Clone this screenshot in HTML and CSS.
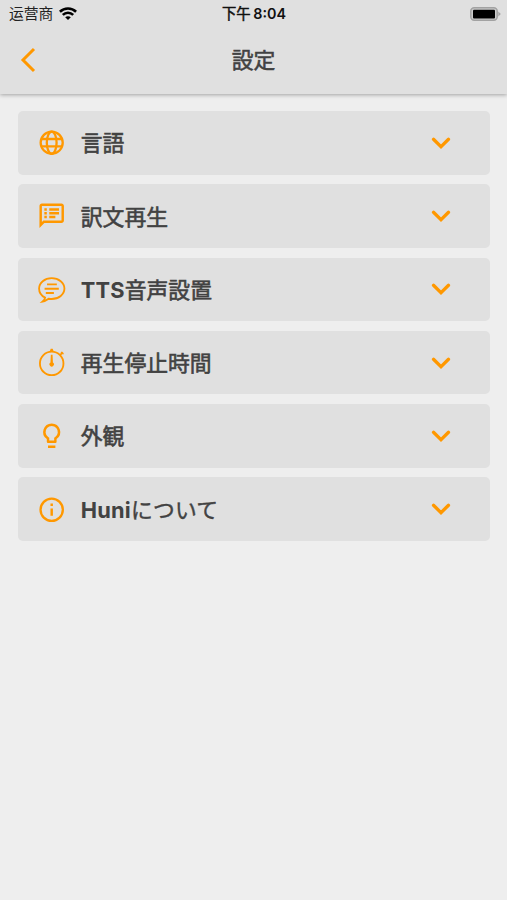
FILE: index.html
```html
<!DOCTYPE html>
<html lang="ja">
<head>
<meta charset="utf-8">
<title>設定</title>
<link rel="stylesheet" href="styles.css">
</head>
<body>
<header class="header">
  <div class="status">
    <div class="carrier"><span lang="zh-CN">运营商</span>
      <svg class="wifi" viewBox="0 0 18 13"><g fill="none" stroke="#000" stroke-width="2.6"><path d="M.9 4.7C5.4.4 12.6.4 17.1 4.7"/><path d="M3.8 7.9C6.8 5 11.2 5 14.2 7.9"/></g><path d="M9 13 6.2 10.2C7.8 8.8 10.2 8.8 11.8 10.2Z"/></svg>
    </div>
    <div class="clock"><span lang="zh-CN">下午</span> 8:04</div>
    <svg class="battery" viewBox="0 0 31 14"><rect x=".8" y=".8" width="26.4" height="12.4" rx="3.4" fill="#ccc" stroke="#a2a2a2" stroke-width="1.5"/><rect x="3" y="2.7" width="22" height="8.8" rx="1"/><path d="M28.300 4.600 30.800 7 28.300 9.400Z" fill="#a2a2a2"/></svg>
  </div>
  <div class="nav">
    <svg class="back" viewBox="0 0 16 26"><path d="M14 2 3 13 14 24"/></svg>
    <h1 class="title">設定</h1>
  </div>
</header>
<main class="list">
  <section class="card">
    <svg class="icon" viewBox="0 0 24 24"><g class="line"><circle cx="12" cy="12" r="9"/><ellipse cx="12" cy="12" rx="4" ry="9"/><path d="M3.5 9h17M3.5 15h17"/></g></svg>
    <span class="label">言語</span>
    <svg class="chevron" viewBox="0 0 20 12"><path d="M2.500 2.300 10 9.600 17.500 2.300"/></svg>
  </section>
  <section class="card">
    <svg class="icon" viewBox="0 0 24 24"><path fill-rule="evenodd" d="M20 2H4c-1.1 0-1.99.9-1.99 2L2 22l4-4h14c1.1 0 2-.9 2-2V4c0-1.1-.9-2-2-2zm0 14H5.2L4 17.2V4h16v12zM6 12h2v2H6zm0-3h2v2H6zm0-3h2v2H6zm4 6h5v2h-5zm0-3h8v2h-8zm0-3h8v2h-8z"/></svg>
    <span class="label">訳文再生</span>
    <svg class="chevron" viewBox="0 0 20 12"><path d="M2.500 2.300 10 9.600 17.500 2.300"/></svg>
  </section>
  <section class="card">
    <svg class="icon" viewBox="0 0 24 24"><g class="line thin"><path d="M6.6 18.5C3.4 17 1.7 14.6 1.7 11.1 1.7 6.4 6.2 2.6 12 2.6s10.400 3.800 10.400 8.500S17.800 19.600 12 19.600q-1.300 0-2.500-.2C7.800 20.600 6.200 21.500 4.600 21.700Q6.300 20.300 6.600 18.500Z"/><path d="M8.200 7.700h8M6.200 11.200h11.600M7.200 14.700h6.600"/></g></svg>
    <span class="label"><b>TTS</b>音声設置</span>
    <svg class="chevron" viewBox="0 0 20 12"><path d="M2.500 2.300 10 9.600 17.500 2.300"/></svg>
  </section>
  <section class="card">
    <svg class="icon" viewBox="0 0 24 24"><g class="line thin"><circle cx="12" cy="12.600" r="9.600"/><path d="M18.800 5.800 20.600 4"/></g><path d="M11.200.6h1.600l1 2.700h-3.600zM19.200 3.400l1.200-.6 1.500 1.500-.6 1.200z"/><path d="M11.300 5.500h1.400l.3 6.300a1.800 1.800 0 1 1-2 0z"/></svg>
    <span class="label">再生停止時間</span>
    <svg class="chevron" viewBox="0 0 20 12"><path d="M2.500 2.300 10 9.600 17.500 2.300"/></svg>
  </section>
  <section class="card">
    <svg class="icon" viewBox="0 0 24 24"><path d="M9 20h6v2H9zM12 2a7 7 0 0 0-4 12.740V17a1 1 0 0 0 1 1h6a1 1 0 0 0 1-1v-2.260A7 7 0 0 0 12 2zm2.850 11.100-.85.600V16h-4v-2.300l-.85-.6A5 5 0 1 1 14.850 13.100z"/></svg>
    <span class="label">外観</span>
    <svg class="chevron" viewBox="0 0 20 12"><path d="M2.500 2.300 10 9.600 17.500 2.300"/></svg>
  </section>
  <section class="card">
    <svg class="icon" viewBox="0 0 24 24"><circle class="line" cx="12" cy="12" r="9.100"/><path d="M11 7h2v2h-2zM11 11h2v6h-2z"/></svg>
    <span class="label"><b>Huni</b><span class="kana">について</span></span>
    <svg class="chevron" viewBox="0 0 20 12"><path d="M2.500 2.300 10 9.600 17.500 2.300"/></svg>
  </section>
</main>
</body>
</html>
```
FILE: styles.css
```css
* { box-sizing: border-box; }
body {
  margin: 0;
  min-height: 900px;
  background: #eee;
  color: #424242;
  font-family: Inter, "Noto Sans CJK JP", sans-serif;
}
svg { display: block; flex: none; }
.header {
  height: 94px;
  background: #e0e0e0;
  box-shadow: 0 1px 4px rgba(0, 0, 0, .32);
}
.status {
  display: grid;
  grid-template-columns: 1fr auto 1fr;
  align-items: center;
  height: 27px;
  padding: 0 6px 0 9px;
  color: #222;
  font: 500 14.8px/20px Inter, "Noto Sans CJK SC", sans-serif;
}
.carrier { display: flex; align-items: center; gap: 6px; }
.carrier span { font-weight: 400; }
.wifi { width: 18px; height: 13px; }
.clock { padding-right: 2px; font-size: 14.300px; font-weight: 600; word-spacing: -1px; color: #111; }
.clock span { font-weight: 400; -webkit-text-stroke: .5px; }
.battery { width: 31px; height: 14px; justify-self: end; }
.nav {
  display: grid;
  grid-template-columns: 1fr auto 1fr;
  align-items: center;
  height: 66px;
  padding: 0 20px;
}
.back { width: 16px; height: 26px; fill: none; stroke: #ff9800; stroke-width: 3; }
.title { margin: 0; font-size: 21.8px; line-height: 30px; font-weight: 400; -webkit-text-stroke: .55px; }
.list {
  display: flex;
  flex-direction: column;
  gap: 9.8px;
  padding: 17px 17px 0 18px;
}
.card {
  display: flex;
  align-items: center;
  height: 63.5px;
  padding: 0 39px 0 19.300px;
  border-radius: 5px;
  background: #e0e0e0;
}
.icon { width: 29.400px; height: 29.400px; fill: #ff9800; }
.line { fill: none; stroke: #ff9800; stroke-width: 1.900; }
.thin { stroke-width: 1.500; }
.label {
  flex: 1;
  margin-left: 14.100px;
  padding-top: 1px;
  font-size: 21.800px;
  line-height: 32px;
  font-weight: 400;
  white-space: nowrap;
  -webkit-text-stroke: .6px;
}
.label b { font-weight: 650; letter-spacing: .2px; -webkit-text-stroke: 0; }
.kana { letter-spacing: .2px; -webkit-text-stroke: .4px; }
.chevron { width: 20px; height: 12px; fill: none; stroke: #ff9800; stroke-width: 3.300; stroke-linecap: round; }
```
